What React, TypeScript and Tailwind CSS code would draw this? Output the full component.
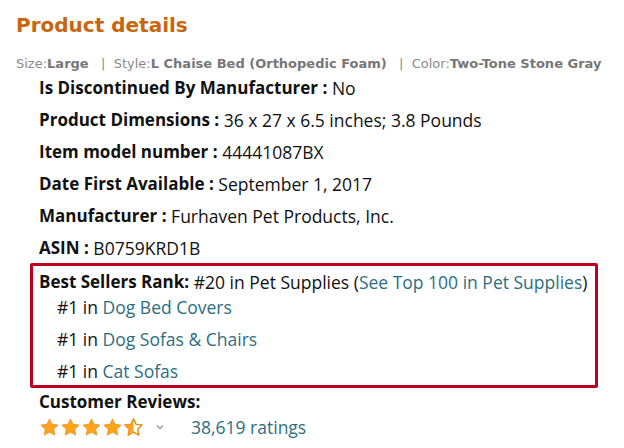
import React from "react";

const Star = ({ type }: { type: "full" | "half" }) => {
  const d =
    "M12 2.2l3 6.2 6.8.8-5 4.7 1.3 6.8L12 17.4l-6.1 3.3 1.3-6.8-5-4.7 6.8-.8z";
  if (type === "full")
    return (
      <svg width="21" height="21" viewBox="0 0 24 24">
        <path d={d} fill="#FFA41C" stroke="#E8890C" strokeWidth="0.8" strokeLinejoin="round" />
      </svg>
    );
  return (
    <svg width="21" height="21" viewBox="0 0 24 24">
      <defs>
        <clipPath id="lh">
          <rect x="0" y="0" width="12" height="24" />
        </clipPath>
      </defs>
      <path d={d} fill="#fff" stroke="#E8890C" strokeWidth="1.6" strokeLinejoin="round" />
      <path d={d} fill="#FFA41C" clipPath="url(#lh)" />
    </svg>
  );
};

const Row = ({ label, value }: { label: string; value: string }) => (
  <div className="h-8 flex items-center">
    <span className="font-bold">{label}</span>
    <span className="text-[17.5px]">&nbsp;{value}</span>
  </div>
);

export default function App() {
  return (
    <div className="w-[624px] h-[448px] bg-white overflow-hidden relative">
      <div
        className="pl-4 pt-[11px] text-[20px] font-bold text-[#C7660E] leading-7"
        style={{ fontFamily: "'DejaVu Sans', Verdana, sans-serif" }}
      >
        Product details
      </div>
      <div
        className="pl-4 mt-[15px] text-[13px] text-[#8a8a8a] leading-5 whitespace-nowrap"
        style={{ fontFamily: "'DejaVu Sans', Verdana, sans-serif" }}
      >
        Size:<b className="text-[#777]">Large</b>&nbsp;&nbsp; | &nbsp;Style:
        <b className="text-[#777]">L Chaise Bed (Orthopedic Foam)</b>&nbsp;&nbsp; | &nbsp;Color:
        <b className="text-[#777]">Two-Tone Stone Gray</b>
      </div>
      <div
        className="text-[17px] text-[#111] whitespace-nowrap"
        style={{ fontFamily: "'Open Sans', 'Noto Sans', sans-serif" }}
      >
        <div className="pl-[39px] -mt-[2px]">
          <Row label="Is Discontinued By Manufacturer :" value="No" />
          <Row label="Product Dimensions :" value="36 x 27 x 6.5 inches; 3.8 Pounds" />
          <Row label="Item model number :" value="44441087BX" />
          <Row label="Date First Available :" value="September 1, 2017" />
          <Row label="Manufacturer :" value="Furhaven Pet Products, Inc." />
          <Row label="ASIN :" value="B0759KRD1B" />
        </div>
        <div className="ml-[30px] -mt-[1px] w-[568px] h-[125px] border-[3px] border-[#BC0022] rounded-[2px] pl-[6px]">
          <div className="h-8 flex items-center">
            <span className="font-bold">Best Sellers Rank:</span>
            <span className="text-[17.5px]">
              &nbsp;#20 in Pet Supplies (<span className="text-[#2C6E7F]">See Top 100 in Pet Supplies</span>)
            </span>
          </div>
          <div className="pl-[18px] -mt-[7px] text-[17.5px]">
            <div className="h-8 flex items-center">
              #1 in&nbsp;<span className="text-[#2C6E7F]">Dog Bed Covers</span>
            </div>
            <div className="h-8 flex items-center">
              #1 in&nbsp;<span className="text-[#2C6E7F]">Dog Sofas &amp; Chairs</span>
            </div>
            <div className="h-8 flex items-center">
              #1 in&nbsp;<span className="text-[#2C6E7F]">Cat Sofas</span>
            </div>
          </div>
        </div>
        <div className="pl-[39px] mt-[2px]">
          <div className="h-6 flex items-center font-bold">Customer Reviews:</div>
          <div className="h-[26px] flex items-center">
            <div className="flex">
              <Star type="full" />
              <Star type="full" />
              <Star type="full" />
              <Star type="full" />
              <Star type="half" />
            </div>
            <svg width="12" height="12" viewBox="0 0 12 12" className="ml-[10px]">
              <path d="M3 4.5l3 3 3-3" fill="none" stroke="#999" strokeWidth="1.4" />
            </svg>
            <span className="ml-[25px] text-[#2C6E7F] text-[17.5px]">38,619 ratings</span>
          </div>
        </div>
      </div>
    </div>
  );
}
